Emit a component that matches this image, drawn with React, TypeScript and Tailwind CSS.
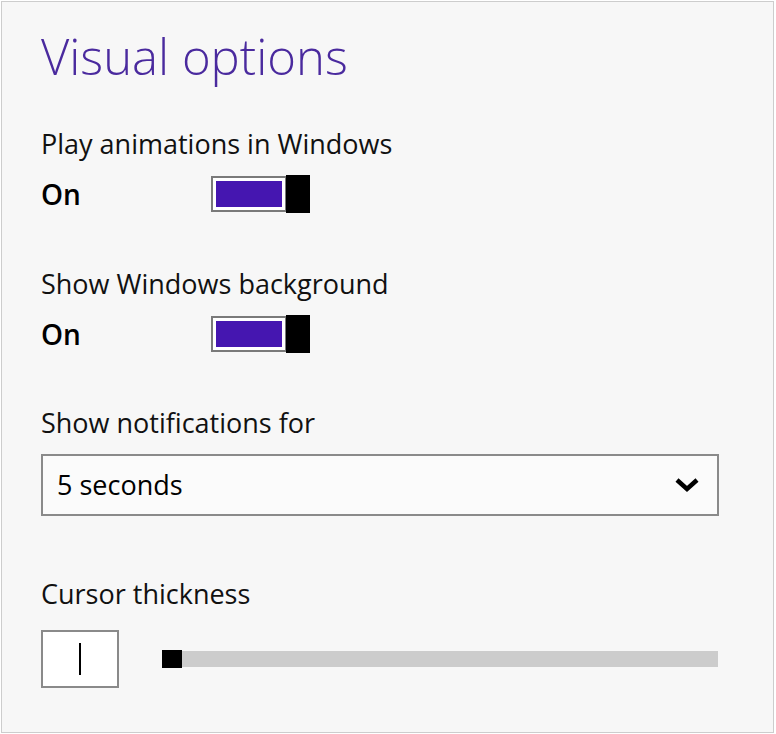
import React from 'react';

const font = { fontFamily: '"Open Sans", "Noto Sans", sans-serif' };

function Toggle() {
  return (
    <div className="flex items-center">
      <div className="h-[36px] w-[76px] border-2 border-[#7a7a7a] bg-white p-[3px]">
        <div className="h-full w-full bg-[#4516b0]" />
      </div>
      <div className="-ml-[1px] h-[38px] w-[24px] bg-black" />
    </div>
  );
}

function ToggleRow({ label }: { label: string }) {
  return (
    <div className="flex flex-col">
      <div className="text-[27px] leading-[34px] text-[#111]">{label}</div>
      <div className="mt-[13px] flex h-[40px] items-center">
        <span className="w-[170px] text-[28px] font-semibold leading-none text-black">On</span>
        <Toggle />
      </div>
    </div>
  );
}

export default function App() {
  return (
    <div className="h-[734px] w-[776px] bg-white p-[1px]" style={font}>
      <div className="flex h-[732px] w-[773px] flex-col border border-[#cdcdcd] bg-[#f7f7f7] pl-[39px] pt-[22px]">
        <h1 className="text-[49px] font-light leading-[64px] text-[#4a2a9e]">Visual options</h1>
        <div className="mt-[39px] flex flex-col gap-[53px]">
          <ToggleRow label="Play animations in Windows" />
          <ToggleRow label="Show Windows background" />
        </div>
        <div className="mt-[52px] text-[27px] leading-[34px] text-[#111]">Show notifications for</div>
        <div className="mt-[14px] flex h-[62px] w-[678px] items-center justify-between border-2 border-[#8a8a8a] bg-[#fbfbfb] pl-[14px] pr-[18px]">
          <span className="text-[27px] text-black">5 seconds</span>
          <svg width="24" height="16" viewBox="0 0 24 16">
            <path d="M2 3 L12 12 L22 3" fill="none" stroke="#000" strokeWidth="4.5" />
          </svg>
        </div>
        <div className="mt-[61px] text-[27px] leading-[34px] text-[#111]">Cursor thickness</div>
        <div className="mt-[19px] flex items-center">
          <div className="flex h-[58px] w-[78px] items-center justify-center border-2 border-[#8a8a8a] bg-white">
            <div className="h-[32px] w-[2px] bg-black" />
          </div>
          <div className="ml-[43px] flex h-[18px] w-[556px] items-center">
            <div className="h-[18px] w-[20px] bg-black" />
            <div className="h-[16px] flex-1 bg-[#cccccc]" />
          </div>
        </div>
      </div>
    </div>
  );
}
